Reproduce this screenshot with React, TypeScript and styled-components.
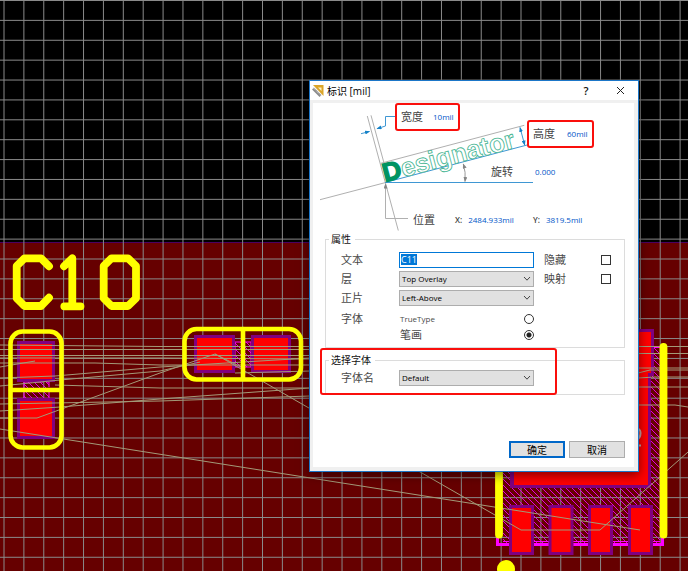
import React from "react";
import styled, { createGlobalStyle } from "styled-components";

const GlobalStyle = createGlobalStyle`
  * { box-sizing: border-box; }
  body { margin: 0; background: #000; font-family: "Open Sans", "Noto Sans CJK SC", sans-serif; }
  input, select, button { font-family: inherit; margin: 0; }
`;

const Workspace = styled.main`
  position: relative;
  min-height: 100vh;
  overflow: hidden;
`;

const Board = styled.svg`
  position: absolute;
  inset: 0;
  width: 100%;
  height: 100%;
`;

const Dialog = styled.section`
  position: absolute;
  left: 309px;
  top: 80px;
  width: 330px;
  border: 1px solid #1b76c8;
  background: #f0f0f0;
  padding: 0 4px 4px 3px;
  box-shadow: 0 3px 10px rgba(0, 0, 0, 0.5);
`;

const TitleBar = styled.header`
  display: flex;
  align-items: center;
  height: 19px;
  margin: 0 -4px 3px -3px;
  padding: 0 12px 0 2px;
  background: #fff;
`;

const Title = styled.h1`
  flex: 1;
  margin: 0 0 0 3px;
  font-size: 10px;
  line-height: 18px;
  font-weight: 400;
  color: #000;
`;

const TitleButton = styled.button`
  display: flex;
  align-items: center;
  justify-content: center;
  width: 12px;
  height: 18px;
  margin-left: 22px;
  padding: 0;
  border: 0;
  background: none;
  color: #111;
  font-size: 11px;
  font-weight: 600;
`;

const Content = styled.form`
  background: #fff;
  padding: 0 9px 9px 12px;
`;

const Diagram = styled.div`
  position: relative;
  height: 129px;
  margin: 0 -9px 0 -12px;
`;

const DiagramArt = styled.svg`
  display: block;
  width: 321px;
  height: 129px;
`;

const Pin = styled.label<{ $x: number; $y: number; $gap: number; $marked?: boolean }>`
  position: absolute;
  left: ${(p) => p.$x}px;
  top: ${(p) => p.$y}px;
  display: flex;
  align-items: center;
  gap: ${(p) => p.$gap}px;
  height: ${(p) => (p.$marked ? 28 : 16)}px;
  padding: ${(p) => (p.$marked ? "0 4px 0 4px" : "0")};
  border: ${(p) => (p.$marked ? "2px solid #fa0f0c" : "0")};
  border-radius: 3px;
  white-space: nowrap;
`;

const PinName = styled.span<{ $small?: boolean }>`
  font-size: ${(p) => (p.$small ? 8 : 11)}px;
  line-height: 16px;
  font-weight: ${(p) => (p.$small ? 600 : 400)};
  color: #444;
`;

const PinValue = styled.input<{ $width: number }>`
  width: ${(p) => p.$width}px;
  height: 14px;
  padding: 0;
  border: 0;
  background: none;
  outline: 0;
  font-size: 8px;
  font-weight: 500;
  line-height: 14px;
  color: #0055c8;
`;

const Group = styled.fieldset<{ $tight?: boolean }>`
  position: relative;
  min-width: 0;
  margin: 0 0 5px;
  padding: ${(p) => (p.$tight ? "1px 13px 7px 15px" : "4px 13px 4px 15px")};
  border: 1px solid #dcdcdc;
`;

const Legend = styled.legend`
  margin-left: -12px;
  padding: 0 4px 0 2px;
  font-size: 10px;
  line-height: 14px;
  color: #111;
`;

const Row = styled.div`
  display: grid;
  grid-template-columns: 58px 135px 67px 10px;
  align-items: center;
  height: 19px;
`;

const Name = styled.label<{ $inset?: boolean }>`
  padding-left: ${(p) => (p.$inset ? 10 : 0)}px;
  font-size: 11px;
  line-height: 16px;
  color: #4a4a4a;
`;

const TextBox = styled.input`
  width: 100%;
  height: 16px;
  padding: 0 1px;
  border: 1px solid #0078d7;
  outline: 0;
  background: linear-gradient(#0078d7, #0078d7) 1px 1px / 16px 11px no-repeat #fff;
  color: #fff;
  font-size: 9px;
`;

const SelectWrap = styled.div`
  display: grid;
  align-items: center;
  > * { grid-area: 1 / 1; }
  > svg { justify-self: end; margin-right: 3px; pointer-events: none; }
`;

const Select = styled.select`
  appearance: none;
  width: 100%;
  height: 16px;
  padding: 0 2px;
  border: 1px solid #adadad;
  border-radius: 0;
  background: #e1e1e1;
  color: #000;
  font-size: 8px;
  font-weight: 500;
  line-height: 14px;
`;

const CheckBox = styled.input`
  appearance: none;
  width: 10px;
  height: 10px;
  border: 1px solid #333;
  background: #fff;
`;

const FontRow = styled.div`
  display: grid;
  grid-template-columns: 58px 135px;
  margin-top: 4px;
`;

const Option = styled.label<{ $cjk?: boolean }>`
  display: flex;
  align-items: center;
  justify-content: space-between;
  height: 16px;
  padding-left: 1px;
  font-size: ${(p) => (p.$cjk ? 11 : 8)}px;
  line-height: 16px;
  color: #4a4a4a;
`;

const Radio = styled.input`
  appearance: none;
  width: 10px;
  height: 10px;
  border: 1px solid #333;
  border-radius: 50%;
  background: #fff;
  &:checked { background: radial-gradient(circle, #222 0 2px, #fff 3px); }
`;

const Highlight = styled.div`
  position: absolute;
  left: -5px;
  right: 68px;
  top: -5px;
  height: 47px;
  border: 2px solid #fa0f0c;
  border-radius: 3px;
  pointer-events: none;
`;

const FontGroup = styled.div`
  position: relative;
`;

const Actions = styled.footer`
  display: flex;
  justify-content: flex-end;
  gap: 4px;
  margin-top: 46px;
`;

const ActionButton = styled.button<{ $primary?: boolean }>`
  width: 56px;
  height: 17px;
  padding: 0;
  border: ${(p) => (p.$primary ? "2px solid #0067c8" : "1px solid #adadad")};
  background: #e1e1e1;
  color: #000;
  font-size: 10px;
  line-height: 12px;
`;

const PITCH = 19.885;
const steps = (n: number) => Array.from({ length: n }, (_, i) => i);

const airwires = [
  "M0 429L640 530", "M215 354L521 530H600L688 452", "M0 418H37L160 373L215 354L243 368",
  "M0 345L160 346.500H310", "M0 349.500H310", "M0 358H160L310 359", "M0 363H95L160 365H310",
  "M0 367L35 361", "M0 378L55 376L160 367L310 358", "M0 386L60 380L160 371L200 362",
  "M55 385L160 388H310", "M0 411L60 407L160 399L310 388", "M0 404L160 401L310 396",
  "M0 355.500H310", "M235 373L310 371",
  "M638 346.500H688", "M638 353.500H688", "M638 368H688", "M638 373L650 370H688",
  "M638 378L655 377H688", "M638 387H688", "M638 405H675L688 407",
];

function Pad({ x, y, w, h }: { x: number; y: number; w: number; h: number }) {
  return <rect x={x + 1.5} y={y + 1.5} width={w - 3} height={h - 3} fill="#f00" stroke="#800080" strokeWidth={3} />;
}

function CircuitBoard() {
  return (
    <Board aria-hidden="true">
      <defs>
        <pattern id="hatch" width="6" height="6" patternUnits="userSpaceOnUse">
          <path d="M-1 -1L7 7" stroke="#e000e0" strokeWidth="1" />
        </pattern>
      </defs>
      <rect width="100%" height="100%" fill="#000" />
      <rect y="242" width="100%" height="100%" fill="#600" />
      <path d="M0 242.500H4000" stroke="#4b0060" />
      <g stroke="#8a8a8a">
        {steps(120).map((i) => <line key={i} x1={4 + i * PITCH} x2={4 + i * PITCH} y1="0" y2="100%" />)}
        {steps(80).map((i) => <line key={i} y1={0.5 + i * PITCH} y2={0.5 + i * PITCH} x1="0" x2="100%" />)}
      </g>
      <rect x="503" y="347" width="157" height="196" fill="url(#hatch)" />
      <path d="M503 541.500H660M641 347.500H662" fill="none" stroke="#f0f" />
      <path d="M497.500 538V544.500H662.500V538" fill="none" stroke="#f0f" strokeWidth="3" />
      <rect x="24" y="382" width="25" height="17" fill="url(#hatch)" stroke="#f0f" strokeDasharray="8 3" />
      <rect x="235" y="342" width="16" height="25" fill="url(#hatch)" stroke="#f0f" />
      <path d="M510 329H654V376H651V488H510Z" fill="#800080" />
      <path d="M514 332H651V373H648V485H514Z" fill="#f00" />
      <Pad x={17} y={341} w={38} h={41} />
      <Pad x={17} y={398} w={38} h={41} />
      <Pad x={194} y={335} w={41} h={38} />
      <Pad x={251} y={335} w={40} h={38} />
      {[509, 548.5, 588, 628].map((x) => <Pad key={x} x={x} y={505} w={25} h={50} />)}
      <path d="M636 429C642 427 642 438 636 440M638 445.500H641" fill="none" stroke="#c8a0a0" strokeWidth="2" />
      <g fill="none" stroke="#a39a78">
        {airwires.map((d) => <path key={d} d={d} />)}
      </g>
      <g fill="none" stroke="#ff0" strokeLinecap="round">
        <g strokeWidth="7.800" strokeLinejoin="round">
          <path d="M49 266.300L41 258.300H24.500L16.700 266V298.300L24.500 306H41L49 297.700" />
          <path d="M64 266.300L72.300 258.300V306M64.300 306.300H80.500" />
          <path d="M111.500 258.300H128L136 266V298.300L128 306H111.500L103.700 298.300V266Z" />
        </g>
        <g strokeWidth="4.600">
          <rect x="10.500" y="331.500" width="51" height="116" rx="12" />
          <path d="M11 390H61M243 329V379" />
          <rect x="184.500" y="329" width="116.500" height="50.500" rx="12" />
        </g>
        <path d="M499 347V534.500M663.500 347V534.500" strokeWidth="7.800" />
      </g>
      <circle cx="506" cy="569" r="9" fill="#ff0" />
    </Board>
  );
}

function RulerIcon() {
  return (
    <svg width="12" height="13" viewBox="0 0 12 13" aria-hidden="true">
      <path d="M1 1H11.500V12Z" fill="#dba529" />
      <path d="M6 3.500H9.500V7Z" fill="#fff3c4" />
      <path d="M1 4.500L8.500 12" stroke="#8c8c8c" strokeWidth="2.600" />
      <path d="M1.500 4L9 11.500" stroke="#e8e8e8" strokeWidth="1" strokeDasharray="1 1" />
    </svg>
  );
}

function DesignatorArt() {
  return (
    <DiagramArt viewBox="313 103 321 129" aria-hidden="true">
      <defs>
        <marker id="blueHead" markerWidth="5" markerHeight="4" refX="4.500" refY="2" orient="auto-start-reverse" markerUnits="userSpaceOnUse">
          <path d="M0 0L5 2L0 4Z" fill="#1582c8" />
        </marker>
        <marker id="grayHead" markerWidth="5" markerHeight="4" refX="4.500" refY="2" orient="auto-start-reverse" markerUnits="userSpaceOnUse">
          <path d="M0 0L5 2L0 4Z" fill="#858585" />
        </marker>
      </defs>
      <g fill="none" stroke="#b0b0b0">
        <path d="M367.300 116L398.300 230.500M371 115.300L384 163M380.700 163.300L524.300 125.300M320 199.700L385 182.700" />
        <path d="M408 218.500H385.500V184" markerEnd="url(#grayHead)" />
        <path d="M463.300 164Q466 172 465 181.500" stroke="#999" markerStart="url(#grayHead)" markerEnd="url(#grayHead)" />
      </g>
      <g fill="none" stroke="#3f97d3">
        <path d="M385 182.500L529 144.500M385 182.500H533" />
        <path d="M396 116.500H385.500V126L377 128.700" markerEnd="url(#blueHead)" />
        <path d="M361 133.700L369.500 131.500" markerEnd="url(#blueHead)" />
        <path d="M520 127.500L524.700 145" markerStart="url(#blueHead)" markerEnd="url(#blueHead)" />
      </g>
      <text transform="translate(385 182) rotate(-14.800)" fontFamily="Liberation Sans, sans-serif" fontSize="26" fontWeight="700">
        <tspan fill="#009362" stroke="#009362" strokeWidth="1.400">D</tspan>
        <tspan fill="#fff" stroke="#3fb491" strokeWidth="0.800">esignator</tspan>
      </text>
    </DiagramArt>
  );
}

function Picker({ id, value }: { id: string; value: string }) {
  return (
    <SelectWrap>
      <Select id={id} defaultValue={value}><option>{value}</option></Select>
      <svg width="8" height="6" viewBox="0 0 8 6" aria-hidden="true">
        <path d="M1 1L4 4.200L7 1" fill="none" stroke="#444" />
      </svg>
    </SelectWrap>
  );
}

export default function App() {
  return (
    <Workspace>
      <GlobalStyle />
      <CircuitBoard />
      <Dialog role="dialog" aria-labelledby="title">
        <TitleBar>
          <RulerIcon />
          <Title id="title">标识 [mil]</Title>
          <TitleButton type="button">?</TitleButton>
          <TitleButton type="button" aria-label="Close">
            <svg width="9" height="9" viewBox="0 0 9 9"><path d="M1 1L8 8M8 1L1 8" stroke="#222" /></svg>
          </TitleButton>
        </TitleBar>
        <Content onSubmit={(e) => e.preventDefault()}>
          <Diagram>
            <DesignatorArt />
            <Pin $x={82} $y={0} $gap={10} $marked><PinName>宽度</PinName><PinValue $width={21} defaultValue="10mil" /></Pin>
            <Pin $x={214} $y={17} $gap={12} $marked><PinName>高度</PinName><PinValue $width={21} defaultValue="60mil" /></Pin>
            <Pin $x={178} $y={61} $gap={22}><PinName>旋转</PinName><PinValue $width={30} defaultValue="0.000" /></Pin>
            <Pin $x={100} $y={109} $gap={0}><PinName>位置</PinName></Pin>
            <Pin $x={142} $y={109} $gap={6}><PinName $small>X:</PinName><PinValue $width={50} defaultValue="2484.933mil" /></Pin>
            <Pin $x={220} $y={109} $gap={6}><PinName $small>Y:</PinName><PinValue $width={45} defaultValue="3819.5mil" /></Pin>
          </Diagram>
          <Group>
            <Legend>属性</Legend>
            <Row>
              <Name htmlFor="text">文本</Name><TextBox id="text" defaultValue="C11" />
              <Name htmlFor="hide" $inset>隐藏</Name><CheckBox id="hide" type="checkbox" />
            </Row>
            <Row>
              <Name htmlFor="layer">层</Name><Picker id="layer" value="Top Overlay" />
              <Name htmlFor="mirror" $inset>映射</Name><CheckBox id="mirror" type="checkbox" />
            </Row>
            <Row>
              <Name htmlFor="place">正片</Name><Picker id="place" value="Left-Above" />
            </Row>
            <FontRow role="radiogroup" aria-labelledby="font-kind">
              <Name as="span" id="font-kind">字体</Name>
              <div>
                <Option>TrueType<Radio type="radio" name="kind" /></Option>
                <Option $cjk>笔画<Radio type="radio" name="kind" defaultChecked /></Option>
              </div>
            </FontRow>
          </Group>
          <FontGroup>
            <Group $tight>
              <Legend>选择字体</Legend>
              <Row><Name htmlFor="font">字体名</Name><Picker id="font" value="Default" /></Row>
            </Group>
            <Highlight />
          </FontGroup>
          <Actions>
            <ActionButton type="submit" $primary>确定</ActionButton>
            <ActionButton type="button">取消</ActionButton>
          </Actions>
        </Content>
      </Dialog>
    </Workspace>
  );
}
